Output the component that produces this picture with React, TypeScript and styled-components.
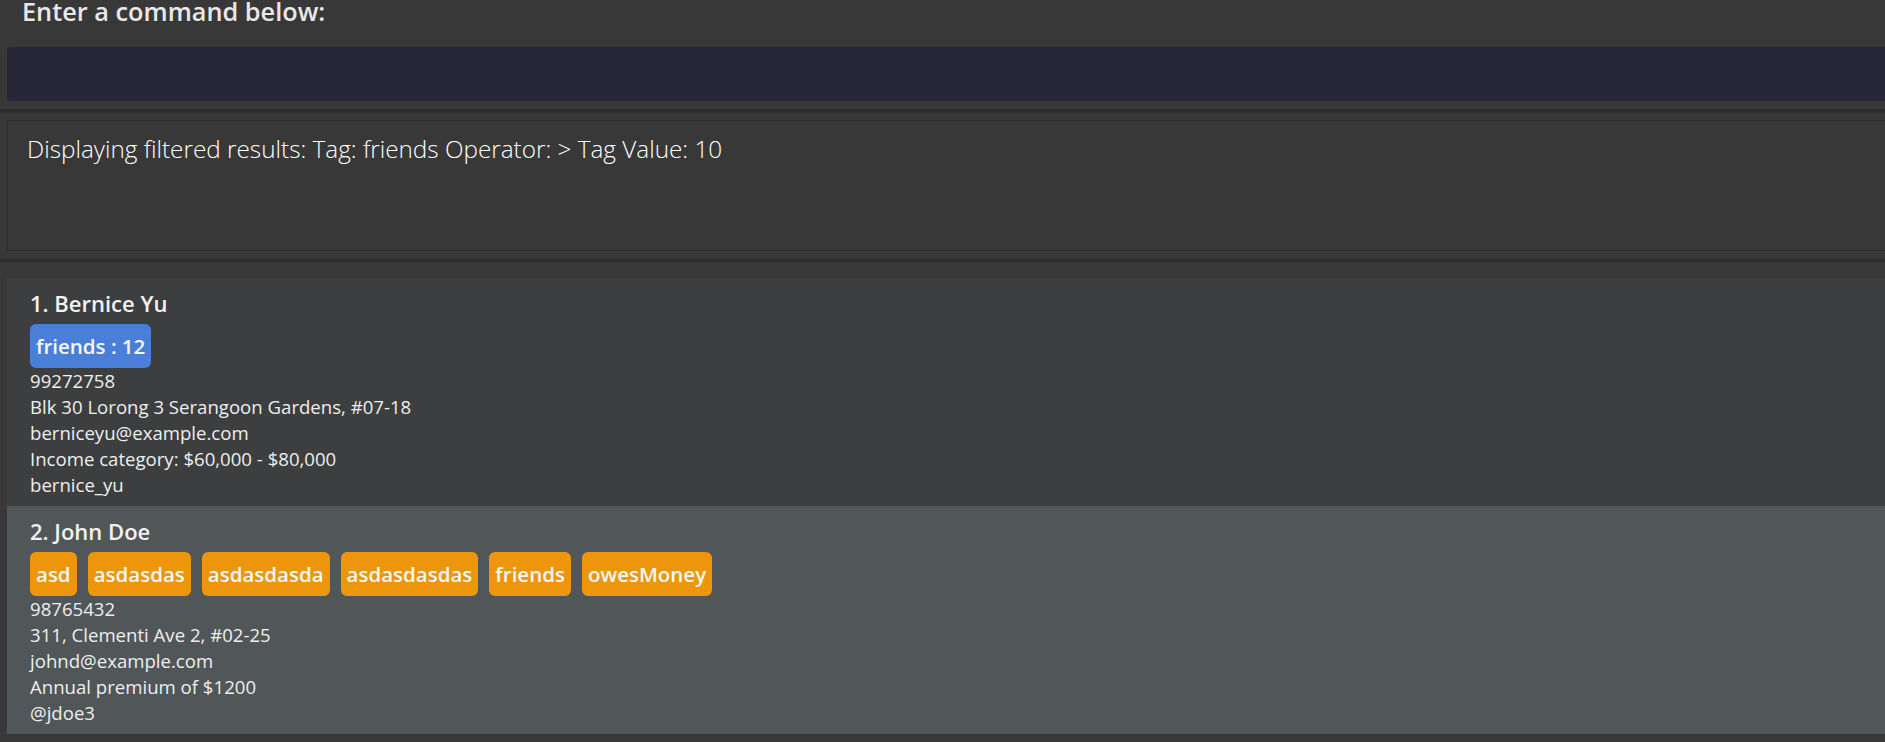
import React from "react";
import styled, { createGlobalStyle } from "styled-components";

const GlobalStyle = createGlobalStyle`
  html, body {
    margin: 0;
    padding: 0;
    background: #383838;
    overflow: hidden;
  }
  body {
    font-family: "Open Sans", "Noto Sans", sans-serif;
    color: #ffffff;
  }
`;

const Page = styled.div`
  display: flex;
  flex-direction: column;
  width: 100%;
  height: 742px;
  background: #383838;
  padding-left: 7px;
  box-sizing: border-box;
  overflow: hidden;
`;

const Header = styled.div`
  height: 47px;
  display: flex;
  align-items: flex-start;
  padding-left: 15px;
  box-sizing: border-box;
  overflow: hidden;
`;

const Title = styled.h1`
  margin: 0;
  font-family: "Open Sans", sans-serif;
  font-weight: 600;
  font-size: 25.3px;
  line-height: 22px;
  color: #e8e8e8;
  white-space: nowrap;
`;

const CommandBox = styled.div`
  height: 54px;
  background: #282737;
  border-radius: 3px 0 0 3px;
  flex-shrink: 0;
`;

const Divider = styled.div`
  height: 3px;
  margin: 8px 0 8px -7px;
  background: #2c2c2c;
  box-shadow: 0 1px 0 #323232;
  flex-shrink: 0;
`;

const ResultBox = styled.div`
  height: 131px;
  box-sizing: border-box;
  border: 1px solid #2b2b2b;
  border-right: none;
  padding: 13px 19px;
  flex-shrink: 0;
`;

const ResultText = styled.p`
  margin: 0;
  font-family: "Open Sans", sans-serif;
  font-weight: 300;
  font-size: 24.3px;
  line-height: 30px;
  color: #ffffff;
  white-space: nowrap;
`;

const ListArea = styled.div`
  display: flex;
  flex-direction: column;
  padding-top: 8px;
`;

const Card = styled.div<{ $odd: boolean }>`
  height: 228px;
  box-sizing: border-box;
  padding: 11px 0 8px 23px;
  background: ${(p) => (p.$odd ? "#515658" : "#3c3e3f")};
  display: flex;
  flex-direction: column;
`;

const Name = styled.div`
  font-family: "Open Sans", sans-serif;
  font-weight: 600;
  font-size: 22px;
  line-height: 28px;
  color: #f2f2f2;
  white-space: nowrap;
`;

const TagRow = styled.div`
  display: flex;
  gap: 11px;
  margin-top: 7px;
  height: 44px;
`;

const Tag = styled.span<{ $tone: "blue" | "orange" }>`
  display: inline-flex;
  align-items: center;
  height: 44px;
  padding: 0 6px;
  border-radius: 6px;
  background: ${(p) => (p.$tone === "blue" ? "#4a7fd9" : "#ed960b")};
  font-family: "Open Sans", sans-serif;
  font-weight: 600;
  font-size: 20.5px;
  line-height: 44px;
  color: #f7f7f7;
  white-space: nowrap;
`;

const Details = styled.div`
  display: flex;
  flex-direction: column;
`;

const Line = styled.div`
  font-family: "Open Sans", sans-serif;
  font-weight: 400;
  font-size: 18.6px;
  line-height: 26px;
  color: #eeeeee;
  white-space: nowrap;
`;

type Person = {
  name: string;
  tags: string[];
  tone: "blue" | "orange";
  lines: string[];
};

const people: Person[] = [
  {
    name: "1. Bernice Yu",
    tags: ["friends : 12"],
    tone: "blue",
    lines: [
      "99272758",
      "Blk 30 Lorong 3 Serangoon Gardens, #07-18",
      "berniceyu@example.com",
      "Income category: $60,000 - $80,000",
      "bernice_yu",
    ],
  },
  {
    name: "2. John Doe",
    tags: ["asd", "asdasdas", "asdasdasda", "asdasdasdas", "friends", "owesMoney"],
    tone: "orange",
    lines: [
      "98765432",
      "311, Clementi Ave 2, #02-25",
      "johnd@example.com",
      "Annual premium of $1200",
      "@jdoe3",
    ],
  },
];

export default function App() {
  return (
    <>
      <GlobalStyle />
      <Page>
        <Header>
          <Title>Enter a command below:</Title>
        </Header>
        <CommandBox />
        <Divider />
        <ResultBox>
          <ResultText>
            Displaying filtered results: Tag: friends Operator: &gt; Tag Value: 10
          </ResultText>
        </ResultBox>
        <Divider />
        <ListArea>
          {people.map((p, i) => (
            <Card key={p.name} $odd={i % 2 === 1}>
              <Name>{p.name}</Name>
              <TagRow>
                {p.tags.map((t) => (
                  <Tag key={t} $tone={p.tone}>
                    {t}
                  </Tag>
                ))}
              </TagRow>
              <Details>
                {p.lines.map((l) => (
                  <Line key={l}>{l}</Line>
                ))}
              </Details>
            </Card>
          ))}
        </ListArea>
      </Page>
    </>
  );
}
